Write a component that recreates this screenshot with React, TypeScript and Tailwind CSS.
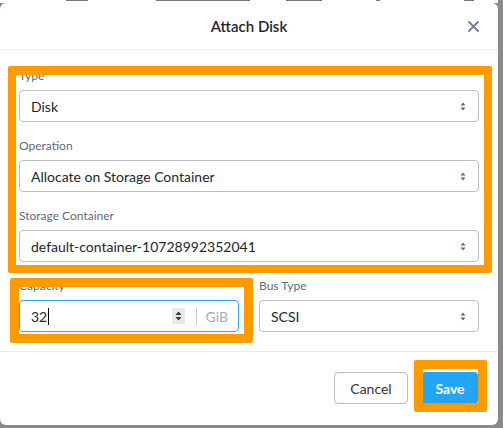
import React from "react";

const font = { fontFamily: "Lato, 'Liberation Sans', sans-serif" };

function Chevrons() {
  return (
    <svg width="6" height="9" viewBox="0 0 6 9" className="shrink-0">
      <path d="M3 0.5 L5.5 3.5 L0.5 3.5 Z" fill="#5f6b7a" />
      <path d="M3 8.5 L5.5 5.5 L0.5 5.5 Z" fill="#5f6b7a" />
    </svg>
  );
}

function Label({ children }: { children: React.ReactNode }) {
  return (
    <div className="h-[14px] mb-[7px] text-[12px] leading-[14px] text-[#5d6b80]">{children}</div>
  );
}

function Select({ value }: { value: string }) {
  return (
    <div className="h-[32px] rounded-[4px] border border-[#b9c0cb] bg-white flex items-center pl-[11px] pr-[12px]">
      <span className="flex-1 text-[14px] text-[#22272e]">{value}</span>
      <Chevrons />
    </div>
  );
}

export default function App() {
  return (
    <div className="relative w-[503px] h-[428px] overflow-hidden flex bg-[#8a8a8a]" style={font}>
      <div className="w-[498px] flex flex-col">
        <div className="h-[3px] bg-white flex items-start">
          <div className="ml-[66px] mt-0 h-[1px] w-[22px] bg-[#777]" />
          <div className="ml-[68px] h-[1px] w-[94px] bg-[#777]" />
          <div className="ml-[36px] h-[1px] w-[36px] bg-[#777]" />
          <div className="ml-[54px] h-[1px] w-[4px] bg-[#777]" />
          <div className="ml-[84px] h-[1px] w-[10px] bg-[#777]" />
        </div>
        <div className="h-[422px] bg-white rounded-[6px] flex flex-col">
          <div className="h-[47px] border-b border-[#e8eaee] flex items-center">
            <div className="w-[30px] shrink-0" />
            <div className="flex-1 text-center text-[15px] font-semibold text-[#22272e]">Attach Disk</div>
            <div className="w-[30px] shrink-0 flex items-center">
              <svg width="11" height="11" viewBox="0 0 11 11">
                <path d="M1 1 L10 10 M10 1 L1 10" stroke="#6e7f96" strokeWidth="1.8" strokeLinecap="round" />
              </svg>
            </div>
          </div>
          <div className="pt-[19px] pb-[19px] px-[19px] flex flex-col gap-[17px] border-b border-[#e8eaee]">
            <div>
              <Label>Type</Label>
              <Select value="Disk" />
            </div>
            <div>
              <Label>Operation</Label>
              <Select value="Allocate on Storage Container" />
            </div>
            <div>
              <Label>Storage Container</Label>
              <Select value="default-container-10728992352041" />
            </div>
            <div className="grid grid-cols-2 gap-[20px]">
              <div>
                <Label>Capacity</Label>
                <div className="h-[32px] rounded-[4px] border border-[#2ea4f2] bg-white flex items-center pl-[11px] pr-[10px]">
                  <span className="text-[14px] text-[#22272e]">32</span>
                  <span className="w-[1px] h-[17px] bg-black ml-[1px]" />
                  <span className="flex-1" />
                  <div className="w-[13px] h-[16px] bg-[#e9e9e9] flex items-center justify-center">
                    <svg width="7" height="10" viewBox="0 0 7 10">
                      <path d="M3.5 0.5 L6.5 4 L0.5 4 Z" fill="#333" />
                      <path d="M3.5 9.5 L6.5 6 L0.5 6 Z" fill="#333" />
                    </svg>
                  </div>
                  <span className="w-[1px] h-[17px] bg-[#c8cdd5] ml-[11px] mr-[9px]" />
                  <span className="text-[14px] text-[#a3acb9]">GiB</span>
                </div>
              </div>
              <div>
                <Label>Bus Type</Label>
                <Select value="SCSI" />
              </div>
            </div>
          </div>
          <div className="flex-1 flex items-center justify-end pr-[20px] gap-[14px] pb-[1px]">
            <button className="h-[32px] w-[74px] rounded-[4px] border border-[#b9c0cb] bg-white text-[14px] text-[#333]">Cancel</button>
            <button className="h-[32px] w-[56px] rounded-[4px] bg-[#22a5f7] text-[14px] font-bold text-white">Save</button>
          </div>
        </div>
        <div className="h-[3px]" />
      </div>
      <div className="w-[5px]" />

      <div className="absolute left-[8px] top-[66px] w-[484px] h-[207px] border-[8px] border-t-[9px] border-[#ff9a00] rounded-[2px]" />
      <div className="absolute left-[10px] top-[278px] w-[243px] h-[65px] border-[9px] border-[#ff9a00] rounded-[2px]" />
      <div className="absolute left-[414px] top-[360px] w-[73px] h-[52px] border-[9px] border-[#ff9a00] rounded-[2px]" />
    </div>
  );
}
